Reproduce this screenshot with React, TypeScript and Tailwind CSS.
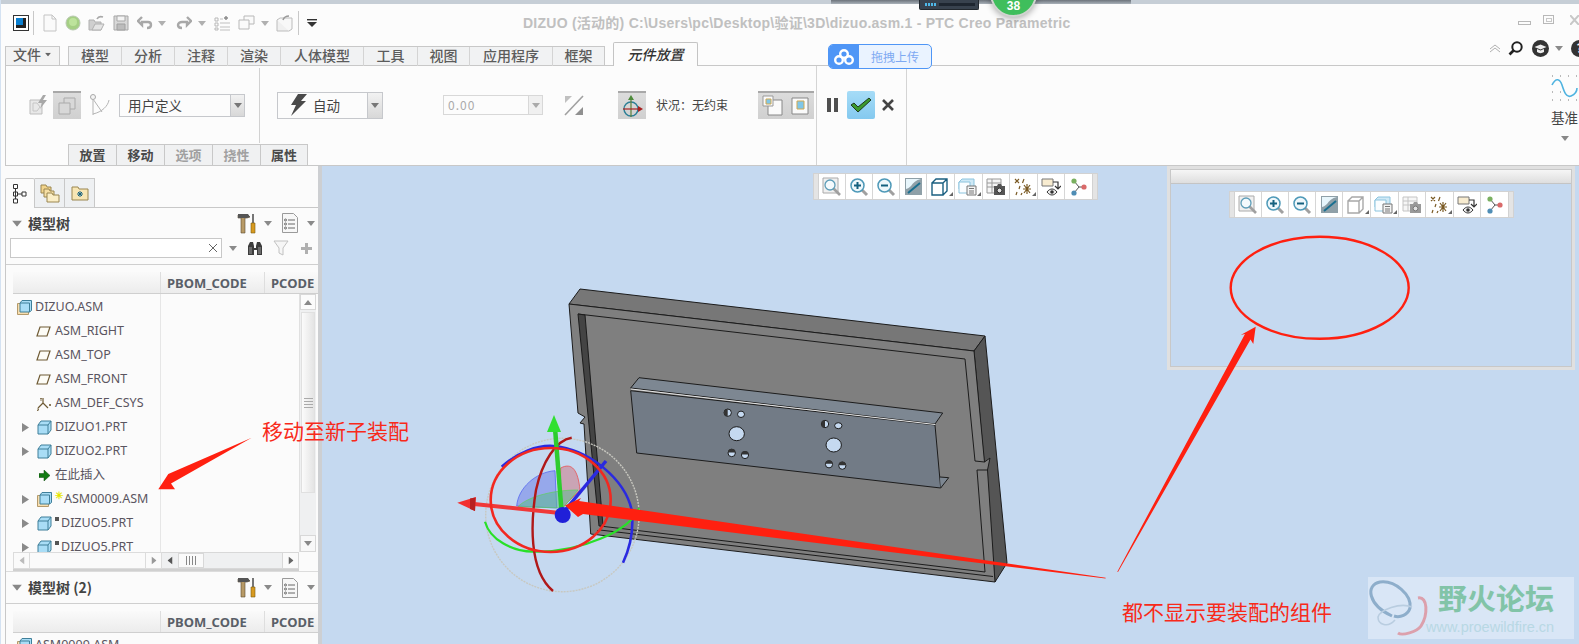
import React from "react";

const CJK = "font-['Noto_Sans_CJK_SC','Noto_Sans',sans-serif]";

function Dd({ c = "#8a8a8a", className = "" }: { c?: string; className?: string }) {
  return (
    <svg width="8" height="5" viewBox="0 0 8 5" className={className}>
      <path d="M0 0h8L4 5z" fill={c} />
    </svg>
  );
}

function Qat() {
  return (
    <div className="flex items-center h-[38px] w-[330px] shrink-0">
      <div className="ml-[13px] w-[16px] h-[16px] border border-[#333] p-[2px] bg-white">
        <div className="w-full h-full bg-[#0a7fd0] border-r-[3px] border-b-[3px] border-[#222]" />
      </div>
      <div className="ml-[4px] w-px h-[24px] bg-[#c8c8c8]" />
      <svg width="16" height="18" viewBox="0 0 16 18" className="ml-[8px]">
        <path d="M2 1h8l4 4v12H2z" fill="#fafafa" stroke="#c4c4c4" />
        <path d="M10 1v4h4" fill="none" stroke="#c4c4c4" />
      </svg>
      <svg width="16" height="16" viewBox="0 0 16 16" className="ml-[7px]">
        <circle cx="8" cy="8" r="7" fill="#a5cf84" stroke="#b8c8b0" />
        <circle cx="8" cy="7" r="4" fill="#bde39c" />
      </svg>
      <svg width="17" height="16" viewBox="0 0 17 16" className="ml-[7px]">
        <path d="M1 5h5l1 2h6v8H1z" fill="#cfcfcf" stroke="#b0b0b0" />
        <path d="M4 15l3-6h9l-3 6z" fill="#e4e4e4" stroke="#b0b0b0" />
        <path d="M9 4c1-2 3-3 6-2" fill="none" stroke="#a8a8a8" strokeWidth="1.6" />
      </svg>
      <svg width="16" height="16" viewBox="0 0 16 16" className="ml-[8px]">
        <path d="M1 1h14v14H1z" fill="#d8d8d8" stroke="#a8a8a8" />
        <path d="M4 1h8v5H4z" fill="#f4f4f4" stroke="#a8a8a8" />
        <path d="M4 9h8v6H4z" fill="#bcbcbc" stroke="#a0a0a0" />
      </svg>
      <svg width="16" height="14" viewBox="0 0 16 14" className="ml-[8px]">
        <path d="M5 1L1 5l4 4V6h6c2 0 3 1 3 3s-2 3-4 3" fill="none" stroke="#a8a8a8" strokeWidth="2.4" />
      </svg>
      <Dd c="#b0b0b0" className="ml-[5px]" />
      <svg width="16" height="14" viewBox="0 0 16 14" className="ml-[10px]">
        <path d="M11 1l4 4-4 4V6H6C4 6 2 7 2 9s2 3 4 3" fill="none" stroke="#a8a8a8" strokeWidth="2.4" />
      </svg>
      <Dd c="#b0b0b0" className="ml-[6px]" />
      <svg width="16" height="16" viewBox="0 0 16 16" className="ml-[8px]">
        <path d="M1 3h3v3H1zM1 8h3v3H1zM1 13h3v2H1z" fill="none" stroke="#b8b8b8" />
        <path d="M6 8h10M6 12h10M6 15h10M6 4h3" stroke="#c0c0c0" />
        <path d="M10 3h4M12 1v4" stroke="#8a8a8a" strokeWidth="1.4" />
      </svg>
      <svg width="17" height="16" viewBox="0 0 17 16" className="ml-[8px]">
        <path d="M6 1h10v8H6z" fill="#fafafa" stroke="#b8b8b8" />
        <path d="M1 5h10v9H1z" fill="#fafafa" stroke="#b8b8b8" />
      </svg>
      <Dd c="#b0b0b0" className="ml-[6px]" />
      <svg width="17" height="17" viewBox="0 0 17 17" className="ml-[7px]">
        <path d="M1 5h12v11H1z" fill="#f0f0f0" stroke="#bcbcbc" />
        <path d="M1 5l3-2h12v11l-3 2" fill="#f8f8f8" stroke="#bcbcbc" />
        <path d="M7 5c1-3 3-4 6-4" fill="none" stroke="#9a9a9a" strokeWidth="1.5" />
      </svg>
      <div className="ml-[5px] w-px h-[24px] bg-[#c8c8c8]" />
      <svg width="10" height="8" viewBox="0 0 10 8" className="ml-[8px]">
        <path d="M0 0h10v1.4H0z" fill="#333" />
        <path d="M0 3h10L5 8z" fill="#333" />
      </svg>
    </div>
  );
}

function TabCell({ w, label }: { w: string; label: string }) {
  return (
    <div className={`${w} h-[19px] pb-[4px] flex items-center justify-center border-r border-[#d4d4d4] last:border-r-0 font-medium`}>
      {label}
    </div>
  );
}

function TabsRow() {
  return (
    <div className={`flex items-end h-[23px] text-[14px] text-[#5c5c5c] leading-none ${CJK}`}>
      <div className="ml-[5px] w-[55px] h-[19px] pb-[4px] flex items-center justify-center gap-[3px] bg-[#f3f3f3] border border-b-0 border-[#c8c8c8] font-medium">
        文件
        <Dd c="#666" className="scale-75" />
      </div>
      <div className="ml-[8px] flex h-[19px] border border-b-0 border-[#c8c8c8] bg-[#f1f2f3]">
        <TabCell w="w-[53px]" label="模型" />
        <TabCell w="w-[53px]" label="分析" />
        <TabCell w="w-[53px]" label="注释" />
        <TabCell w="w-[53px]" label="渲染" />
        <TabCell w="w-[83px]" label="人体模型" />
        <TabCell w="w-[54px]" label="工具" />
        <TabCell w="w-[52px]" label="视图" />
        <TabCell w="w-[83px]" label="应用程序" />
        <TabCell w="w-[51px]" label="框架" />
      </div>
      <div className="ml-[8px] w-[85px] h-[24px] pb-[2px] -mb-px relative z-10 flex items-center justify-center bg-[#fcfcfc] border border-b-0 border-[#c4c4c4] rounded-t-[2px] italic font-medium text-[#333]">
        元件放置
      </div>
      <div className="ml-auto flex items-center h-[23px] pb-[11px] w-[90px] relative">
        <svg width="12" height="9" viewBox="0 0 12 9" className="shrink-0">
          <path d="M1 5l5-4 5 4M1 8l5-4 5 4" fill="none" stroke="#b0b0b0" strokeWidth="1" />
        </svg>
        <svg width="15" height="15" viewBox="0 0 15 15" className="ml-[7px] shrink-0">
          <circle cx="9" cy="6" r="4.7" fill="#fff" stroke="#222" strokeWidth="2" />
          <path d="M5.5 9.5L1.500 13.500" stroke="#222" strokeWidth="2.6" />
        </svg>
        <svg width="17" height="17" viewBox="0 0 17 17" className="ml-[9px] shrink-0">
          <circle cx="8.5" cy="8.5" r="8.5" fill="#333" />
          <path d="M2.5 7l6-2.5 6 2.5-6 2.5zM5 9v3c2 1.500 5 1.500 7 0V9l-3.500 1.500z" fill="#eee" />
        </svg>
        <Dd className="ml-[6px] shrink-0" />
        <div className="ml-[8px] w-[17px] h-[17px] rounded-full bg-[#333] text-white text-[12px] font-bold flex items-center justify-center shrink-0">?</div>
      </div>
    </div>
  );
}

function Btn({ active = true, children }: { active?: boolean; children: React.ReactNode }) {
  return (
    <div className={`w-[28px] h-[28px] flex items-center justify-center border-t-2 border-[#a8a8a8] ${active ? "bg-linear-to-b from-[#dcdcdc] to-[#d0d0d0]" : ""}`}>
      {children}
    </div>
  );
}

function Ribbon() {
  return (
    <div className="flex ml-[5px] h-[101px] border-l border-b border-t border-[#c8c8c8] bg-[#fcfcfc]">
      <div className={`w-[810px] shrink-0 flex flex-col ${CJK}`}>
        <div className="flex items-center h-[78px]">
          <svg width="19" height="20" viewBox="0 0 19 20" className="ml-[23px] shrink-0">
            <path d="M1 5h12v14H1z" fill="#e8e8e8" stroke="#bdbdbd" />
            <path d="M4 8h4l3 4-3 4H4z" fill="none" stroke="#c6c6c6" />
            <path d="M14 0l-5 8h4l-2 6 7-9h-4l3-5z" fill="#a8a8a8" />
          </svg>
          <div className="ml-[5px] shrink-0">
            <Btn>
              <svg width="18" height="18" viewBox="0 0 18 18">
                <path d="M6 1h11v11H6z" fill="#d8d8d8" stroke="#aaa" />
                <path d="M1 6h11v11H1z" fill="#d8d8d8" stroke="#aaa" />
              </svg>
            </Btn>
          </div>
          <svg width="22" height="22" viewBox="0 0 22 22" className="ml-[7px] shrink-0">
            <circle cx="5" cy="3" r="2.500" fill="#f4f4f4" stroke="#a8a8a8" />
            <path d="M5 5v16M5 5l9 13M21 6c-1 6-7 12-16 14" fill="none" stroke="#b4b4b4" />
          </svg>
          <div className="ml-[9px] w-[126px] h-[23px] flex items-center border border-[#c6c8cc] text-[13.5px] text-[#444] shrink-0">
            <span className="flex-1 pl-[8px]">用户定义</span>
            <div className="w-[14px] h-full flex items-center justify-center bg-linear-to-b from-[#f2f2f2] to-[#d8d8d8] border-l border-[#c6c8cc]">
              <Dd c="#777" />
            </div>
          </div>
          <div className="ml-[14px] w-px h-[75px] bg-[#d2d2d2] shrink-0" />
          <div className="ml-[17px] w-[106px] h-[27px] flex items-center border border-[#c6c8cc] text-[13.5px] text-[#444] shrink-0">
            <svg width="17" height="22" viewBox="0 0 17 22" className="ml-[12px]">
              <path d="M8 0h9l-6 7h5L1 22l5-11H1z" fill="#4a4a4a" />
            </svg>
            <span className="flex-1 pl-[6px]">自动</span>
            <div className="w-[15px] h-full flex items-center justify-center bg-linear-to-b from-[#f2f2f2] to-[#d8d8d8] border-l border-[#c6c8cc]">
              <Dd c="#777" />
            </div>
          </div>
          <div className="ml-[60px] w-[100px] h-[20px] flex items-center border border-[#d8d8d8] text-[12px] text-[#aaa] shrink-0">
            <span className="flex-1 pl-[4px] tracking-[1px]">0.00</span>
            <div className="w-[14px] h-full flex items-center justify-center bg-[#f0f0f0] border-l border-[#d8d8d8]">
              <Dd c="#aaa" />
            </div>
          </div>
          <svg width="20" height="21" viewBox="0 0 20 21" className="ml-[21px] shrink-0">
            <path d="M19 1L1 20" stroke="#a0a0a0" strokeWidth="1.6" />
            <path d="M1 1h7L1 8z" fill="#c0c0c0" />
            <path d="M19 20h-8l8-8z" fill="#909090" />
          </svg>
          <div className="ml-[34px] shrink-0">
            <Btn>
              <svg width="24" height="24" viewBox="0 0 24 24">
                <circle cx="11" cy="15" r="7" fill="none" stroke="#2c7f96" strokeWidth="1.4" />
                <path d="M11 3v20" stroke="#5b7f3a" strokeWidth="1.2" />
                <path d="M11 1l-3 5h6z" fill="#4d8a3a" />
                <path d="M3 15h16" stroke="#a82020" strokeWidth="1.2" />
                <path d="M23 15l-5-3v6z" fill="#a82020" />
              </svg>
            </Btn>
          </div>
          <span className="ml-[10px] w-[72px] text-[12px] text-[#444] whitespace-nowrap shrink-0">状况：无约束</span>
          <div className="ml-[30px] flex shrink-0">
            <Btn>
              <svg width="22" height="22" viewBox="0 0 22 22">
                <path d="M7 5h14v15H7z" fill="#fafafa" stroke="#888" />
                <path d="M2 1h10v10H2z" fill="#fafafa" stroke="#999" />
                <path d="M5 4h5v5H5z" fill="#7fc6e8" stroke="#d2a850" />
              </svg>
            </Btn>
            <Btn>
              <svg width="20" height="20" viewBox="0 0 20 20">
                <path d="M2 2h16v16H2z" fill="#fafafa" stroke="#888" />
                <path d="M7 5h7v8H7z" fill="#7fc6e8" stroke="#d2a850" />
              </svg>
            </Btn>
          </div>
        </div>
        <div className="flex h-[21px] ml-[62px] text-[13px] font-bold leading-none">
          {[
            ["放置", "text-[#4a4a4a]"],
            ["移动", "text-[#4a4a4a]"],
            ["选项", "text-[#a0a0a0]"],
            ["挠性", "text-[#a0a0a0]"],
            ["属性", "text-[#4a4a4a]"],
          ].map(([t, c]) => (
            <div key={t} className={`w-[48px] h-full pb-[1px] flex items-center justify-center bg-[#f0f1f2] border border-b-0 border-r-0 last:border-r border-[#c8c8c8] ${c}`}>
              {t}
            </div>
          ))}
        </div>
      </div>
      <div className="w-[91px] shrink-0 border-l border-r border-[#d4d4d4] flex items-start pt-[25px]">
        <div className="ml-[10px] mt-[7px] flex gap-[3px]">
          <div className="w-[4px] h-[14px] bg-[#4f4f4f]" />
          <div className="w-[4px] h-[14px] bg-[#4f4f4f]" />
        </div>
        <div className="ml-[9px] w-[28px] h-[28px] rounded-[2px] bg-linear-to-b from-[#a6dcf7] to-[#84c9ef] flex items-center justify-center">
          <svg width="22" height="16" viewBox="0 0 22 16">
            <path d="M1 8l3-2 4 4L19 1l2 2L8 15z" fill="#3c9a2c" stroke="#1e3a1e" strokeWidth="1" />
          </svg>
        </div>
        <svg width="12" height="12" viewBox="0 0 12 12" className="ml-[7px] mt-[8px]">
          <path d="M1 1l10 10M11 1L1 11" stroke="#444" strokeWidth="2.600" />
        </svg>
      </div>
      <div className="flex-1 flex justify-end">
        <div className={`w-[28px] flex flex-col items-start ${CJK}`}>
          <svg width="28" height="27" viewBox="0 0 28 27" className="mt-[9px]">
            <path d="M1 1h1M9 1h1M17 1h1M25 1h1M1 17h1M9 17h1M17 25h1M25 25h1M1 25h1M9 25h1" stroke="#777" />
            <path d="M1 10c4-8 8-6 10 0s4 13 9 11 6-6 6-8" fill="none" stroke="#4fb3e0" strokeWidth="1.600" />
          </svg>
          <span className="mt-[6px] text-[13.5px] text-[#444] leading-[18px]">基准</span>
          <Dd c="#888" className="ml-[10px] mt-[10px]" />
        </div>
      </div>
    </div>
  );
}

function Cell({ children, dd = false }: { children: React.ReactNode; dd?: boolean }) {
  return (
    <div className={`relative ${dd ? "w-[28px]" : "w-[27px]"} h-full border-r border-[#d6d6d6] last:border-r-0 flex items-center justify-center bg-white`}>
      {children}
      {dd && <span className="absolute right-[1px] bottom-[3px] w-0 h-0 border-l-[4px] border-b-[4px] border-l-transparent border-b-[#666]" />}
    </div>
  );
}

function Mag({ sym }: { sym?: "+" | "-" }) {
  return (
    <svg width="20" height="20" viewBox="0 0 20 20">
      <path d="M12 12l6 6" stroke="#a0a0a0" strokeWidth="3" />
      <circle cx="8.500" cy="8.500" r="6.500" fill="#eef7fb" stroke="#4e99b8" strokeWidth="1.500" />
      <path d={sym === "+" ? "M5 8.500h7M8.500 5v7" : "M5 8.500h7"} stroke="#15607f" strokeWidth="2" />
    </svg>
  );
}

function ViewBar({ dim = false }: { dim?: boolean }) {
  return (
    <div className="flex h-[27px] bg-[#e4e4e4] border border-[#d2d2d2] px-[4px]">
      <div className="flex h-full border-l border-r border-[#d2d2d2]">
        <Cell>
          <svg width="20" height="20" viewBox="0 0 20 20">
            <path d="M1 1h15v15H1z" fill="#f0f0f0" stroke="#aaa" />
            <path d="M11 11l7 7" stroke="#a0a0a0" strokeWidth="2.600" />
            <circle cx="8" cy="8" r="5" fill="#f4fafd" stroke="#5d9db8" strokeWidth="1.300" />
          </svg>
        </Cell>
        <Cell><Mag sym="+" /></Cell>
        <Cell><Mag sym="-" /></Cell>
        <Cell>
          <svg width="17" height="17" viewBox="0 0 17 17">
            <path d="M0 0h17v17H0z" fill="#8fa0a8" />
            <path d="M1 1h15c-5 1-8 4-10 7-2 2-4 3-5 3z" fill="#e8f6fc" />
            <path d="M3 15L15 5" stroke="#1a6f90" strokeWidth="2" />
          </svg>
        </Cell>
        <Cell dd>
          <svg width="17" height="18" viewBox="0 0 17 18" className="mr-[2px]">
            <path d="M1 5h11v12H1zM1 5l4-4h11v12l-4 4M12 5l4-4" fill="none" stroke={dim ? "#a8a8a8" : "#1a5f80"} strokeWidth="1.400" />
          </svg>
        </Cell>
        <Cell dd>
          <svg width="19" height="19" viewBox="0 0 19 19" className="mr-[2px]">
            <path d="M1 5l3-3h12v10H1z" fill="#cfe9f6" stroke="#8cc4de" />
            <path d="M1 5h11v11H1z" fill="#fafdff" stroke="#8cc4de" />
            <path d="M9 9h9v9H9z" fill="#f4f4f4" stroke="#777" />
            <path d="M11 11.500h5M11 14h5M11 16h5" stroke="#777" />
          </svg>
        </Cell>
        <Cell>
          <svg width="20" height="18" viewBox="0 0 20 18">
            <path d="M1 1h14v14H1zM1 5h14M1 9h14M6 1v14" fill="#f6f6f6" stroke={dim ? "#c4c4c4" : "#999"} />
            <path d="M8 8h3l1-2h3l1 2h3v9H8z" fill={dim ? "#999" : "#555"} />
            <circle cx="13.500" cy="12.500" r="2.400" fill="#e0e0e0" stroke={dim ? "#777" : "#333"} />
          </svg>
        </Cell>
        <Cell dd>
          <svg width="18" height="18" viewBox="0 0 18 18" className="mr-[1px]">
            <path d="M1 1l4 4M5 1L1 5M10 1L8.500 5M6 8l-1 3M3 14l-1 3M13 6v10M9 11h8M10 7l6 8M16 7l-6 8M8 15l-1 2" stroke="#7a5a24" strokeWidth="1.200" fill="none" />
          </svg>
        </Cell>
        <Cell>
          <svg width="20" height="18" viewBox="0 0 20 18">
            <path d="M1 1h11v7H1z" fill="#f8ecd0" stroke="#777" />
            <path d="M12 4h5v6M14 8l3 3 3-3" fill="none" stroke="#333" strokeWidth="1.200" />
            <path d="M6 14c3-4 7-4 10 0-3 4-7 4-10 0z" fill="#eee" stroke="#333" />
            <circle cx="11" cy="14" r="1.800" fill="#333" />
          </svg>
        </Cell>
        <Cell>
          <svg width="16" height="18" viewBox="0 0 16 18">
            <path d="M3 3l5 6M3 15l5-6h5" stroke="#555" fill="none" />
            <circle cx="3" cy="3" r="2.600" fill="#7ab060" />
            <circle cx="3" cy="15" r="2.600" fill="#4f8db5" />
            <circle cx="13" cy="9" r="2.600" fill="#d96a6a" />
          </svg>
        </Cell>
      </div>
    </div>
  );
}

function Cube({ asm = false }: { asm?: boolean }) {
  return (
    <svg width="15" height="15" viewBox="0 0 15 15" className="shrink-0">
      {asm && <path d="M0.500 3.500h11v11h-11z" fill="#f7deb0" stroke="#b59a6a" />}
      <path d={asm ? "M3 3l2-2.500h9.500v10l-2 1.500H3z" : "M1 5l3-4h10v9l-3 4H1z"} fill="#a9ddf6" stroke="#3f7f99" />
      <path d={asm ? "M3 3h9.500v9" : "M1 5h10v9M11 5l3-4"} fill="none" stroke="#3f7f99" />
    </svg>
  );
}

function Plane() {
  return (
    <svg width="15" height="11" viewBox="0 0 15 11" className="shrink-0">
      <path d="M4 1h10l-3 9H1z" fill="#fdfcf6" stroke="#6e5a34" strokeWidth="1.200" />
    </svg>
  );
}

function Caret() {
  return (
    <svg width="7" height="9" viewBox="0 0 7 9" className="shrink-0">
      <path d="M0 0l7 4.500L0 9z" fill="#8a8a8a" />
    </svg>
  );
}

function Grip({ vertical = false }: { vertical?: boolean }) {
  const line = vertical ? "w-[9px] h-px bg-[#aaa]" : "w-px h-[9px] bg-[#888]";
  return (
    <div className={`flex ${vertical ? "flex-col" : "flex-row"} gap-[2px]`}>
      <span className={line} />
      <span className={line} />
      <span className={line} />
      <span className={line} />
    </div>
  );
}

function TreeRow({ pl, icon, text, caret, mark, gap = "ml-[4px]" }: { pl: string; icon: React.ReactNode; text: string; caret?: boolean; mark?: "star" | "sq"; gap?: string }) {
  return (
    <div className={`h-[24px] flex items-center whitespace-nowrap ${pl}`}>
      {caret && <span className="w-[15px] flex items-center shrink-0"><Caret /></span>}
      {icon}
      {mark === "star" && <span className="ml-[3px] -mt-[9px] w-[8px] text-[10px] leading-none text-[#e6e600] font-bold">✳</span>}
      {mark === "sq" && <span className="ml-[3px] -mt-[9px] w-[4px] h-[4px] bg-[#555] shrink-0" />}
      <span className={mark === "star" ? "ml-[1px]" : mark === "sq" ? "ml-[2px]" : gap}>{text}</span>
    </div>
  );
}

function ToolPair() {
  return (
    <div className="flex items-center">
      <svg width="19" height="21" viewBox="0 0 19 21">
        <path d="M1 2h10l2 2-3 1H8v15H4V5H1z" fill="#b89a66" stroke="#5a4a30" strokeWidth=".6" />
        <path d="M1 1h10l2 3-3 1H1z" fill="#555" />
        <path d="M16 1v9" stroke="#555" strokeWidth="1.600" />
        <path d="M14 10h4v10h-4z" fill="#d89a20" stroke="#7a5a10" strokeWidth=".6" />
      </svg>
      <Dd className="ml-[8px]" />
      <svg width="16" height="20" viewBox="0 0 16 20" className="ml-[10px]">
        <path d="M.500.500h11l4 4v15H.500z" fill="#f7f7f7" stroke="#9a9a9a" />
        <path d="M6 7h7M6 11h7M6 15h7" stroke="#666" />
        <circle cx="3.500" cy="7" r="1" fill="none" stroke="#666" />
        <circle cx="3.500" cy="11" r="1" fill="none" stroke="#666" />
        <circle cx="3.500" cy="15" r="1" fill="none" stroke="#666" />
      </svg>
      <Dd className="ml-[9px]" />
    </div>
  );
}

function ColHeader() {
  return (
    <div className="flex h-[22px] ml-[7px] border-b border-[#cfcfcf] bg-linear-to-b from-[#fafafa] to-[#ececec] text-[13px] font-bold text-[#5a5f68] overflow-hidden font-['Noto_Sans',sans-serif]">
      <div className="w-[148px] shrink-0 border-r border-[#dedede]" />
      <div className="w-[104px] shrink-0 border-r border-[#dedede] pl-[6px] leading-[23px]">PBOM_CODE</div>
      <div className="pl-[6px] leading-[23px]">PCODE</div>
    </div>
  );
}

function Sidebar() {
  return (
    <div className="w-[322px] shrink-0 h-[479px] bg-[#fbfbfb] border-r-4 border-[#cdcfd2] overflow-hidden">
      <div className="flex items-end h-[42px] ml-[5px] border-b border-[#c8c8c8]">
        <div className="w-[30px] h-[30px] -mb-px bg-[#fbfbfb] border border-b-0 border-[#c8c8c8] rounded-t-[2px] flex items-center justify-center">
          <svg width="14" height="20" viewBox="0 0 14 20">
            <path d="M.500.500h4v4h-4zM.500 8h4v4h-4zM.500 15h4v4h-4zM9 8h4v4H9zM2.500 4.500V15M4.500 10H9" fill="#fff" stroke="#333" />
          </svg>
        </div>
        <div className="w-[30px] h-[29px] bg-[#eef0f2] border border-l-0 border-b-0 border-[#c8c8c8] flex items-center justify-center">
          <svg width="20" height="20" viewBox="0 0 20 20">
            <path d="M1 2h5l1 2h4v6H1z" fill="#f2d48c" stroke="#9a8650" />
            <path d="M4 6h5l1 2h4v6H4z" fill="#f6dfa4" stroke="#9a8650" />
            <path d="M7 10h5l1 2h6v7H7z" fill="#fbeec6" stroke="#9a8650" />
          </svg>
        </div>
        <div className="w-[30px] h-[29px] bg-[#eef0f2] border border-l-0 border-b-0 border-[#c8c8c8] flex items-center justify-center">
          <svg width="18" height="15" viewBox="0 0 18 15">
            <path d="M1 1h6l1 2h9v11H1z" fill="#f8e6b4" stroke="#9a8650" />
            <path d="M9 5v6M6 8h6M7 6l4 4M11 6l-4 4" stroke="#15607f" />
          </svg>
        </div>
      </div>
      <div className="ml-[5px] border-l border-[#c8c8c8]">
        <div className="h-[30px] flex items-center pl-[6px] pr-[3px]">
          <Dd c="#888" className="scale-125 ml-[1px]" />
          <span className={`ml-[7px] text-[14px] font-bold text-[#444] ${CJK}`}>模型树</span>
          <div className="ml-auto"><ToolPair /></div>
        </div>
        <div className="h-[27px] border-b border-[#cfcfcf] flex items-start pl-[4px]">
          <div className="w-[212px] h-[20px] bg-white border border-[#c8c8c8] flex items-center justify-end pr-[4px]">
            <svg width="8" height="8" viewBox="0 0 8 8">
              <path d="M0 0l8 8M8 0L0 8" stroke="#666" />
            </svg>
          </div>
          <Dd className="ml-[7px] mt-[8px]" />
          <svg width="16" height="16" viewBox="0 0 16 16" className="ml-[10px] mt-[2px]">
            <path d="M1 15V6l2-4h3l1 4v2h2V6l1-4h3l2 4v9h-5V10H7v5z" fill="#3c3c3c" />
            <path d="M2 7h3v7H2zM11 7h3v7h-3z" fill="#6b6b6b" />
          </svg>
          <svg width="16" height="16" viewBox="0 0 16 16" className="ml-[10px] mt-[2px]">
            <path d="M1 1h14l-5 7v7l-4-2V8z" fill="#f6f6f6" stroke="#c2c2c2" />
          </svg>
          <svg width="11" height="11" viewBox="0 0 11 11" className="ml-[12px] mt-[5px]">
            <path d="M4 0h3v4h4v3H7v4H4V7H0V4h4z" fill="#b0b0b0" />
          </svg>
        </div>
        <div className="h-[7px]" />
        <ColHeader />
        <div className="flex h-[258px] ml-[7px] text-[12.500px] text-[#5a5560] font-['Noto_Sans','Noto_Sans_CJK_SC',sans-serif] overflow-hidden">
          <div className="w-[148px] shrink-0 border-r border-[#e6e6e6] pt-[1px]">
            <TreeRow pl="pl-[4px]" gap="ml-[3px]" icon={<Cube asm />} text="DIZUO.ASM" />
            <TreeRow pl="pl-[23px]" icon={<Plane />} text="ASM_RIGHT" />
            <TreeRow pl="pl-[23px]" icon={<Plane />} text="ASM_TOP" />
            <TreeRow pl="pl-[23px]" icon={<Plane />} text="ASM_FRONT" />
            <TreeRow
              pl="pl-[23px]"
              gap="ml-[3px]"
              icon={
                <svg width="16" height="16" viewBox="0 0 16 16" className="shrink-0">
                  <path d="M7 8V3M7 8L2 13M7 8l5 5" stroke="#6e5a34" fill="none" strokeWidth="1.200" />
                  <path d="M4 3l1 1 1-1M5 4v2M13 9l2 2M15 9l-2 2M1 14h2l-2 2h2" stroke="#6e5a34" fill="none" strokeWidth=".8" />
                </svg>
              }
              text="ASM_DEF_CSYS"
            />
            <TreeRow pl="pl-[9px]" gap="ml-[3px]" caret icon={<Cube />} text="DIZUO1.PRT" />
            <TreeRow pl="pl-[9px]" gap="ml-[3px]" caret icon={<Cube />} text="DIZUO2.PRT" />
            <TreeRow pl="pl-[26px]" gap="ml-[5px]" icon={<svg width="11" height="11" viewBox="0 0 11 11" className="shrink-0"><path d="M0 3.500h5V0l6 5.500L5 11V7.500H0z" fill="#127a12" stroke="#0c4a0c" strokeWidth=".5" /></svg>} text="在此插入" />
            <TreeRow pl="pl-[9px]" caret mark="star" icon={<Cube asm />} text="ASM0009.ASM" />
            <TreeRow pl="pl-[9px]" caret mark="sq" icon={<Cube />} text="DIZUO5.PRT" />
            <TreeRow pl="pl-[9px]" caret mark="sq" icon={<Cube />} text="DIZUO5.PRT" />
          </div>
          <div className="w-[138px] shrink-0" />
          <div className="w-[17px] shrink-0 h-full flex flex-col bg-[#eff0f1] border-l border-[#e0e0e0]">
            <div className="h-[16px] bg-[#fbfbfb] border border-[#d8d8d8] flex items-center justify-center">
              <Dd c="#888" className="rotate-180" />
            </div>
            <div className="mx-[1px] mt-[2px] h-[181px] bg-linear-to-r from-[#fbfbfb] to-[#e4e4e4] border border-[#e0e0e0] flex items-center justify-center">
              <Grip vertical />
            </div>
            <div className="flex-1" />
            <div className="h-[17px] bg-[#f8f8f8] border border-[#d8d8d8] flex items-center justify-center">
              <Dd c="#888" />
            </div>
          </div>
        </div>
        <div className="flex h-[19px] ml-[7px] w-[286px] border-b-2 border-[#d0d0d0] bg-[#eff0f1]">
          <div className="w-[149px] h-[17px] flex items-center justify-between bg-[#fafafa] border border-[#dcdcdc]">
            <div className="w-[16px] h-full flex items-center justify-center border-r border-[#dcdcdc]"><Dd c="#bbb" className="rotate-90" /></div>
            <div className="w-[16px] h-full flex items-center justify-center border-l border-[#dcdcdc]"><Dd c="#999" className="-rotate-90" /></div>
          </div>
          <div className="flex-1 h-[17px] flex items-center border border-l-0 border-[#d8d8d8]">
            <div className="w-[16px] h-full flex items-center justify-center"><Dd c="#555" className="rotate-90" /></div>
            <div className="w-[26px] h-[15px] bg-[#fafafa] border border-[#d8d8d8] flex items-center justify-center">
              <Grip />
            </div>
            <div className="ml-auto w-[16px] h-full flex items-center justify-center bg-[#fafafa] border-l border-[#d8d8d8]"><Dd c="#666" className="-rotate-90" /></div>
          </div>
        </div>
        <div className="h-[33px] flex items-center pl-[6px] pr-[3px] border-b border-[#cfcfcf] border-t border-t-[#dcdcdc]">
          <Dd c="#888" className="scale-125 ml-[1px]" />
          <span className={`ml-[7px] text-[14px] font-bold text-[#444] ${CJK}`}>模型树 (2)</span>
          <div className="ml-auto"><ToolPair /></div>
        </div>
        <div className="h-[7px]" />
        <ColHeader />
        <div className="ml-[11px] h-[24px] flex items-center text-[12.500px] text-[#5a5560] font-['Noto_Sans',sans-serif]">
          <Cube asm />
          <span className="ml-[3px]">ASM0009.ASM</span>
        </div>
      </div>
    </div>
  );
}

function Model() {
  return (
    <svg width="1257" height="479" viewBox="322 166 1257 479" className="absolute left-0 top-0">
      <g stroke="#1c1c1c" strokeWidth="1" strokeLinejoin="round">
        <path d="M569 304L580 289L985 336L974 351Z" fill="#777" />
        <path d="M974 351L985 336L1007 563L995 582Z" fill="#555" />
        <path d="M569 304L974 351L984.500 462L990 458L987.500 470L995 582L590.700 534L584 424L580 423L585 417L578 413Z" fill="#7f7f7f" />
        <path d="M578 314L965 359L975 461L984.500 462M987.500 470L977 470L985 572L600 526" fill="none" />
        <path d="M578 314L585 315L603 526L599 526Z" fill="#444" />
        <path d="M597 531L600 530L993 576.500" fill="none" />
        <path d="M630.700 388L639 377.700L942.700 413L935 424Z" fill="#7d8792" />
        <path d="M630.700 390.700L935 425L940.700 488L636.700 453Z" fill="#727b86" />
        <path d="M940.700 488L948.700 477.700L940 477" fill="#7d8792" />
      </g>
      <path d="M631 389L935 424.500" stroke="#e6e6e6" strokeWidth="1" />
      <g stroke="#1c1c1c" strokeWidth="1" fill="#c5d9f0">
        <ellipse cx="736.700" cy="433.700" rx="7.700" ry="7" />
        <ellipse cx="833.700" cy="445" rx="7.700" ry="7" />
        <ellipse cx="741" cy="414.300" rx="3.500" ry="3.200" />
        <ellipse cx="838.300" cy="425.700" rx="3.700" ry="3" />
        <circle cx="727.700" cy="412.700" r="3.700" />
        <circle cx="825" cy="424" r="3.700" />
        <circle cx="731.700" cy="453" r="3.700" />
        <circle cx="745" cy="455" r="3.600" />
        <circle cx="829" cy="464.300" r="3.600" />
        <circle cx="842.300" cy="465.700" r="3.600" />
      </g>
      <g fill="#333">
        <path d="M727.700 409a3.700 3.700 0 0 0 0 7.400z" />
        <path d="M825 420.300a3.700 3.700 0 0 0 0 7.400z" />
        <path d="M728 452.500a3.700 3.700 0 0 1 7.400 0z" />
        <path d="M741.400 454.500a3.600 3.600 0 0 1 7.200 0z" />
        <path d="M825.400 463.800a3.600 3.600 0 0 1 7.200 0z" />
        <path d="M838.700 465.200a3.600 3.600 0 0 1 7.200 0z" />
      </g>
      <circle cx="562.400" cy="515" r="76.700" fill="none" stroke="#c8c8c0" strokeWidth="1.400" strokeDasharray="2 1" />
      <path d="M516.700 506C518 488 536 472 555 470.700L556.700 508Z" fill="#6f7fe8" fillOpacity=".55" stroke="#4a5cf0" strokeWidth=".7" />
      <path d="M560 508L560.700 468C572 462 578 470 580 490L563 507Z" fill="#d0707a" fillOpacity=".5" stroke="#ee4444" strokeWidth=".7" />
      <path d="M518 506.700C526 498 550 490 578 490L563 508Z" fill="#5cb890" fillOpacity=".55" stroke="#60d060" strokeWidth=".7" />
      <path d="M501.700 466.700C518 452 538 445 553 446C590 449 625 480 631.700 510C634 530 630 548 623 562.700" fill="none" stroke="#2a2ae0" strokeWidth="2.600" />
      <path d="M485 521.700C490 540 512 551 533 551.700C580 553 632 530 639 508" fill="none" stroke="#28e028" strokeWidth="2.200" />
      <path d="M571.700 437.700C556 440 542 462 536 490C531 520 528 570 553 591" fill="none" stroke="#b01818" strokeWidth="2.400" />
      <path d="M562 514L606 461" stroke="#2a2ae0" strokeWidth="3.400" />
      <path d="M561.700 513L555 428" stroke="#2ecc2e" strokeWidth="4.500" />
      <path d="M554 415L547 432L561 432Z" fill="#30e030" />
      <path d="M474 504L560 513" stroke="#f03838" strokeWidth="4" />
      <path d="M457.300 502.700L476 497L475 511Z" fill="#f23030" />
      <path d="M470 498.500L475.500 497.500L475 511L470 509Z" fill="#b82020" />
      <circle cx="562.700" cy="515" r="8" fill="#2020d8" />
      <ellipse cx="550.700" cy="500" rx="60" ry="52" fill="none" stroke="#f22820" strokeWidth="2.600" />
    </svg>
  );
}

function Annotations() {
  return (
    <svg width="1579" height="644" viewBox="0 0 1579 644" className="absolute left-0 top-0 pointer-events-none">
      <path d="M565 505.500L581 498L579 501L1105.700 577.800L1105.500 578.600L583 514L578 517Z" fill="#ff2010" />
      <ellipse cx="1319.700" cy="287.800" rx="89" ry="51" fill="none" stroke="#ff2010" strokeWidth="2.400" />
      <path d="M1117.300 571.700L1245 334L1240.700 335L1255.700 326.700L1253.300 344L1250.500 339.500L1118 572Z" fill="#ff2010" />
      <path d="M251.700 437.700L168.300 474L158.300 489.300L175 489.300L171 483.500Z" fill="#ff2010" />
    </svg>
  );
}

export default function App() {
  return (
    <div className="relative w-[1579px] h-[644px] overflow-hidden bg-[#fcfcfc]">
      <div className="h-[4px] bg-[#c6ced6] flex">
        <div className="ml-[831px] w-[300px] h-[4px] bg-linear-to-b from-[#6d747c] to-[#aab2ba]" />
      </div>
      <div className="flex items-center h-[38px]">
        <Qat />
        <div className="ml-[193px] text-[14px] tracking-[.25px] font-bold text-[#c0c0c0] whitespace-nowrap font-['Liberation_Sans','Noto_Sans_CJK_SC',sans-serif]">
          DIZUO (活动的) C:\Users\pc\Desktop\验证\3D\dizuo.asm.1 - PTC Creo Parametric
        </div>
        <div className="ml-auto flex items-center w-[61px] -mt-[7px]">
          <div className="mt-[6px] w-[13px] h-[4px] border border-[#b8b8b8]" />
          <div className="ml-[12px] w-[11px] h-[9px] border border-[#b8b8b8] p-[1.5px]"><div className="w-full h-full border border-[#c8c8c8]" /></div>
          <svg width="9" height="10" viewBox="0 0 9 10" className="ml-[16px]"><path d="M0 0l9 10M9 0L0 10" stroke="#c8c8c8" strokeWidth="2" /></svg>
        </div>
      </div>
      <TabsRow />
      <Ribbon />
      <div className="flex h-[479px]">
        <Sidebar />
        <div className="relative flex-1 bg-[#c5d9f0] overflow-hidden">
          <Model />
          <div className="flex justify-start pt-[7px] pl-[491px] relative">
            <ViewBar />
          </div>
          <div className="absolute left-[845px] top-0 w-[408px] h-[204px] border-[3px] border-[#e0e0e0] bg-[#c5d9f0] outline outline-[#c8c8c8] -outline-offset-4">
            <div className="h-[14px] mx-[1px] mt-[1px] bg-linear-to-b from-[#f6f6f6] to-[#dedede] border-b border-[#c4c4c4]" />
            <div className="flex pl-[59px] pt-[7px]">
              <ViewBar dim />
            </div>
          </div>
        </div>
      </div>

      <div className="absolute left-0 top-0 w-px h-[644px] bg-[#d4e2f2]" />
      <div className="absolute left-[919px] top-0 w-[60px] h-[10px] bg-[#38424e] rounded-b-[2px] border border-t-0 border-[#22282e] flex items-center pl-[5px] gap-[1px]">
        <span className="w-[2px] h-[3px] bg-[#4fb8e8]" />
        <span className="w-[2px] h-[3px] bg-[#4fb8e8]" />
        <span className="w-[2px] h-[3px] bg-[#4fb8e8]" />
        <span className="w-[2px] h-[3px] bg-[#4fb8e8]" />
        <span className="ml-[2px] w-[36px] h-[3px] bg-[#1e2630]" />
      </div>
      <div className="absolute left-[990px] -top-[30px] w-[47px] h-[47px] rounded-full bg-[#3fbe5c] border-2 border-[#d0d4d0] shadow-[0_2px_6px_rgba(0,0,0,0.3)] flex items-end justify-center pb-[2px] text-white text-[12px] font-bold leading-[14px] font-['Liberation_Sans',sans-serif]">
        38
      </div>
      <div className={`absolute left-[828px] top-[44px] w-[104px] h-[25px] flex rounded-[5px] border border-[#4f96f6] overflow-hidden bg-[#eaf3ff] text-[12px] text-[#7ea9f2] ${CJK} z-20`}>
        <div className="w-[30px] h-full bg-[#4f96f6] flex items-center justify-center">
          <svg width="20" height="18" viewBox="0 0 20 18">
            <circle cx="10" cy="6" r="3.800" fill="none" stroke="#fff" strokeWidth="2.400" />
            <circle cx="5" cy="12" r="3.800" fill="none" stroke="#fff" strokeWidth="2.400" />
            <circle cx="15" cy="12" r="3.800" fill="none" stroke="#fff" strokeWidth="2.400" />
          </svg>
        </div>
        <span className="flex-1 flex items-center justify-center">拖拽上传</span>
      </div>

      <Annotations />
      <div className={`absolute left-[262px] top-[417px] text-[21px] leading-[26px] text-[#f82a1a] whitespace-nowrap ${CJK}`}>移动至新子装配</div>
      <div className={`absolute left-[1122px] top-[598px] text-[21px] leading-[26px] text-[#f82a1a] whitespace-nowrap ${CJK}`}>都不显示要装配的组件</div>

      <div className="absolute left-[1368px] top-[577px] w-[206px] h-[62px] bg-[#d9e6f6]">
        <svg width="70" height="62" viewBox="1368 577 70 62" className="absolute left-0 top-0">
          <path d="M1392 616C1368 605 1365 585 1380 582C1395 580 1412 595 1410 608C1408 615 1400 618 1394 616" fill="none" stroke="#8eaecb" strokeWidth="3" />
          <path d="M1412 607C1400 602 1380 610 1378 617C1378 625 1388 628 1395 620" fill="none" stroke="#b9cde0" strokeWidth="1.600" />
          <path d="M1418 598C1428 596 1428 615 1421 626C1417 632 1402 636 1398 633" fill="none" stroke="#dca0ac" strokeWidth="3" />
        </svg>
        <div className={`absolute left-[70px] top-[4px] text-[29px] leading-[32px] font-bold text-[#82c4a8] whitespace-nowrap ${CJK}`}>野火论坛</div>
        <div className="absolute left-[58px] top-[41px] text-[14.500px] leading-[18px] text-[#b8d8e4] whitespace-nowrap font-['Liberation_Sans',sans-serif]">www.proewildfire.cn</div>
      </div>
    </div>
  );
}
